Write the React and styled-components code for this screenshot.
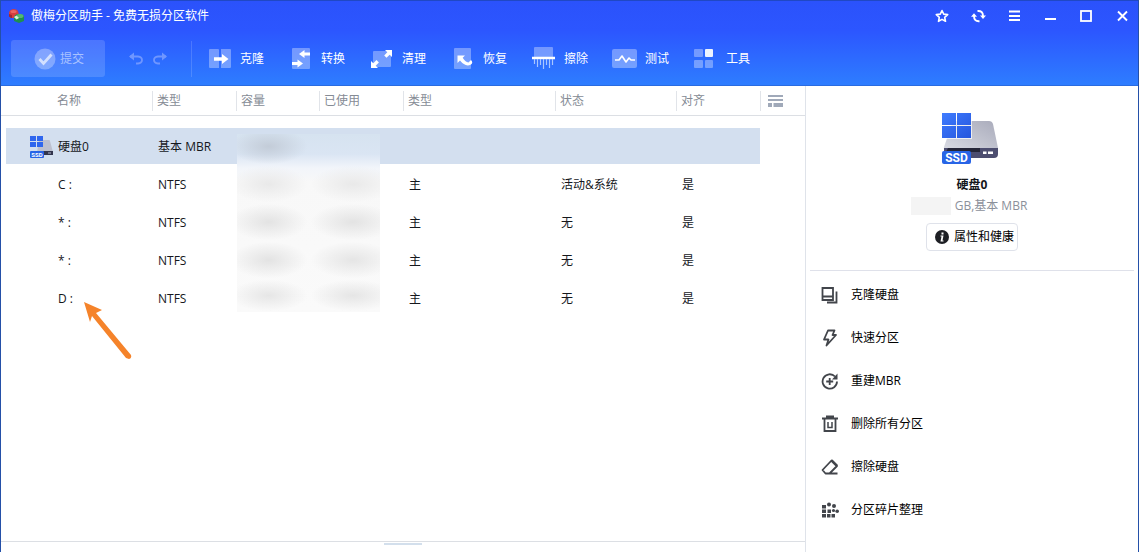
import React from "react"
import styled, { createGlobalStyle } from "styled-components"

const GlobalStyle = createGlobalStyle`
  *{ box-sizing:border-box; }
  body{
    margin:0;
    background:#fff;
    color:#15171c;
    font-family:"Open Sans","Noto Sans CJK SC",sans-serif;
    font-size:12px;
    line-height:18px;
  }
  button{ font:inherit; color:inherit; background:none; border:0; padding:0; cursor:pointer; }
  svg{ display:block; flex:none; }
`

const Window = styled.div`
  display:flex;
  flex-direction:column;
  min-height:100vh;
  border:solid #2450a8;
  border-width:0 1px;
`

const Header = styled.header`
  height:86px;
  color:#fff;
  background:linear-gradient(#2b52fb 0%,#2c56ff 35%,#2e7dff 100%);
  border-top:1px solid #2048c4;
  border-bottom:1px solid #2a6be0;
`

const TitleBar = styled.div`
  display:flex;
  align-items:center;
  height:30px;
  padding-left:6px;
`

const Title = styled.h1`
  flex:1;
  margin:0 0 0 6px;
  font-size:12px;
  font-weight:400;
`

const WindowButtons = styled.div`
  display:flex;
  gap:4px;
`

const WindowButton = styled.button`
  display:grid;
  place-items:center;
  width:32px;
  height:30px;
`

const Toolbar = styled.div`
  display:flex;
  align-items:center;
  padding:9px 0 0 10px;
`

const CommitButton = styled.button`
  display:flex;
  align-items:center;
  justify-content:center;
  gap:4px;
  width:94px;
  height:37px;
  padding-left:2px;
  border-radius:3px;
  background:rgba(255,255,255,.15);
  color:#a9c2ff;
`

const History = styled.div`
  display:flex;
  align-items:center;
  gap:10px;
  height:36px;
  margin-left:23px;
  padding-right:23px;
  border-right:1px solid rgba(255,255,255,.15);
`

const Tools = styled.div`
  display:flex;
  gap:25px;
  margin-left:16px;
`

const ToolButton = styled.button`
  display:flex;
  align-items:center;
  gap:8px;
`

const Body = styled.div`
  display:flex;
  flex:1;
`

const Main = styled.main`
  display:flex;
  flex-direction:column;
  flex:1;
`

const TableWrap = styled.div`
  position:relative;
  flex:1;
`

const Table = styled.table`
  width:100%;
  table-layout:fixed;
  border-collapse:separate;
  border-spacing:0;

  tbody::before{
    content:"";
    display:block;
    height:12px;
  }
`

const HeadCell = styled.th`
  height:30px;
  padding:0 0 0 ${p => p.$first ? 56 : 5}px;
  border-bottom:1px solid #dcdfe4;
  color:#858b95;
  font-weight:400;
  text-align:left;
  background:${p => p.$first ? "none" : "linear-gradient(#e1e4e9,#e1e4e9) left center/1px 20px no-repeat"};
  button{
    display:block;
  }
`

const Row = styled.tr`
  height:${p => p.$selected ? 37 : 38}px;
  td{
    padding:2px 0 0 6px;
    border-bottom:${p => p.$selected ? "1px solid #fff" : "0"};
  }
  td:not(:first-child):not(:last-child){
    background:${p => p.$selected ? "#d3dfef" : "none"};
  }
`

const NameCell = styled.div`
  display:flex;
  align-items:center;
  gap:5px;
  padding-left:17px;
`

const IconSlot = styled.span`
  width:24px;
`

const Mask = styled.div`
  position:absolute;
  left:236px;
  top:48px;
  width:143px;
  display:grid;
  grid-template-columns:1fr 1fr;
  grid-template-rows:31px 38px 38px 38px 33px;
  background:linear-gradient(#d6e3f0 0,#dae5f3 20px,#f2f5fa 34px,#f8f8f8 48px,#fafafa 100%);
`

const Smudge = styled.span`
  background:radial-gradient(ellipse at ${p => p.$right ? 62 : 44}% ${p => p.$top ? 40 : 50}%,${p => p.$color} 0%,transparent 68%);
`

const Pointer = styled.svg`
  position:absolute;
  left:82px;
  top:215px;
`

const Splitter = styled.div`
  height:11px;
  border-top:1px solid #dcdfe4;
  &::before{
    content:"";
    display:block;
    width:38px;
    height:2px;
    margin:1px auto 0;
    background:#d3dfec;
  }
`

const Side = styled.aside`
  width:333px;
  padding:0 4px;
  border-left:1px solid #dfe3ea;
`

const DiskInfo = styled.section`
  display:flex;
  flex-direction:column;
  align-items:center;
  height:185px;
  padding-top:26px;
  border-bottom:1px solid #dfe1ea;
`

const DiskName = styled.h2`
  margin:9px 0 0;
  font-size:12px;
  line-height:20px;
`

const DiskMeta = styled.div`
  display:flex;
  align-items:center;
  gap:4px;
  margin-top:2px;
  padding-right:6px;
  color:#8b909a;
`

const Hidden = styled.span`
  width:40px;
  height:18px;
  background:#f4f4f4;
`

const HealthButton = styled.button`
  display:flex;
  align-items:center;
  gap:5px;
  height:28px;
  margin-top:8px;
  padding:0 3px 0 8px;
  border:1px solid #dfe2ea;
  border-radius:4px;
  color:#000;
`

const Actions = styled.nav`
  display:flex;
  flex-direction:column;
  padding:2px 0 0 11px;
`

const Action = styled.button`
  display:flex;
  align-items:center;
  gap:12px;
  height:43px;
  color:#000;
  text-align:left;
`

const DiskIcon = () => (
  <svg width="62" height="54" viewBox="0 0 62 54">
    <defs>
      <linearGradient id="top" x1="0" y1="1" x2="1" y2="0">
        <stop offset="0" stopColor="#d9dbe3" />
        <stop offset="1" stopColor="#a9abbb" />
      </linearGradient>
      <linearGradient id="pane" x1="0" y1="0" x2="1" y2="1">
        <stop offset="0" stopColor="#3f7cff" />
        <stop offset="1" stopColor="#2556dd" />
      </linearGradient>
    </defs>
    <path d="M12 9h36q3 0 4 3l5 24q0 2-2 2H5q-3 0-2-3z" fill="url(#top)" />
    <path d="M3 36h54v6q0 4-4 4H7q-4 0-4-4z" fill="#4d4e70" />
    <path d="M7 36h32v4H5z" fill="#252638" />
    <path d="M42 39.500h3.500v2.500H42zM47 39.500h5v2.500h-5z" fill="#fff" />
    <path d="M0 0h31v27H0z" fill="#fff" opacity=".7" />
    <path d="M1 1h14v12H1zM16 1h14v12H16zM1 14h14v12H1zM16 14h14v12H16z" fill="url(#pane)" />
    <rect x="1" y="39" width="29" height="13" rx="2" fill="#2764e6" />
    <text x="15.500" y="50" textAnchor="middle" fontSize="12" fontWeight="700" fill="#fff" fontFamily="Roboto, sans-serif">SSD</text>
  </svg>
)

const SmallDiskIcon = () => (
  <svg width="24" height="24" viewBox="0 0 24 24">
    <path d="M10 5h10q1 0 1 1l3 11H8z" fill="#bcc0cf" />
    <path d="M8 16h16v4H8z" fill="#33354d" />
    <path d="M19 17.500h3v1h-3z" fill="#aeb4c8" />
    <path d="M1 1h6v5H1zM8 1h6v5H8zM1 7h6v5H1zM8 7h6v5H8z" fill="#2f66ee" />
    <rect x="1" y="16" width="14" height="7" rx="1" fill="#2764e6" />
    <text x="8" y="22" textAnchor="middle" fontSize="6" fontWeight="700" fill="#fff" fontFamily="Roboto, sans-serif">SSD</text>
  </svg>
)

const Logo = () => (
  <svg width="18" height="16" viewBox="0 0 18 16">
    <path d="M2 5q0-3 4-4 4 0 5 2l1 4-3 3H4L2 8z" fill="#d63f40" />
    <path d="M2 6l3 1v3H4L2 8.500z" fill="#9c2735" />
    <path d="M7 9q1-3 5-3 5 0 5 3v4l-5 2-5-2z" fill="#1f8f50" />
    <ellipse cx="13" cy="8" rx="3.500" ry="2" fill="#54b872" />
    <ellipse cx="6.500" cy="3.500" rx="3" ry="1.500" fill="#ea6663" />
    <path d="M7 9l2.500-1.500L12 10l-2.500 1.500z" fill="#d6f1db" />
  </svg>
)

const ToolIcon = ({ children }) => (
  <svg width="24" height="24" viewBox="0 0 24 24" fill="none" overflow="visible">{children}</svg>
)
const pale = "rgba(255,255,255,.34)"

const tools = [
  { label: "克隆", icon: <>
    <path d="M2 2h8q1 0 1 1v18H2q-1 0-1-1V3q0-1 1-1zM13 2h9q1 0 1 1v17q0 1-1 1h-9z" fill={pale} />
    <path d="M6 10.200h8V7l6.500 5-6.500 5v-3.200H6z" fill="#fff" />
  </> },
  { label: "转换", icon: <>
    <rect x="3" y="1" width="18" height="21" rx="1" fill={pale} />
    <path d="M21 5.500h-5.500V3L10 7l5.500 4V8.500H21zM3 15h5.500v-2.500L14 16.500l-5.500 4V18H3z" fill="#fff" />
  </> },
  { label: "清理", icon: <>
    <rect x="3" y="4" width="18" height="16" rx="1" fill={pale} />
    <path d="M15 3h7v7l-2.300-2.300-3.200 3-2.300-2.300 3.100-3.100zM1 14l2.300 2.300 3.200-3.200 2.400 2.400-3.200 3.200L8 21H1z" fill="#fff" />
  </> },
  { label: "恢复", icon: <>
    <rect x="3" y="1" width="17" height="21" rx="1" fill={pale} />
    <path d="M6.500 8.500H14l-2.300 2.300Q14 15 17.500 15.500L20 13q2.500 2.500 0 4.500-5.500 3-11-3.900L6.500 16z" fill="#fff" />
  </> },
  { label: "擦除", icon: <>
    <path d="M2 10V1q0-1 1-1h17q1 0 1 1v9z" fill={pale} />
    <path d="M0 11h23" stroke="#fff" strokeWidth="2.500" />
    <path d="M2.500 12v5M5.500 12v8M8.500 12v6M11.500 12v10M14.500 12v6M17.500 12v9M20.500 12v6" stroke="#a9c6ff" strokeWidth="1.200" />
  </> },
  { label: "测试", icon: <>
    <rect x="-1" y="2" width="25" height="19" rx="2" fill={pale} />
    <path d="M2 13h4l3-4 4 6 3-4 2 2h4" stroke="#fff" strokeWidth="1.600" strokeLinejoin="round" />
  </> },
  { label: "工具", icon: <>
    <path d="M2 2h6q1 0 1 1v6q0 1-1 1H1q-1 0-1-1V3q0-1 1-1zM2 13h6q1 0 1 1v6q0 1-1 1H1q-1 0-1-1v-6q0-1 1-1zM12 13h6q1 0 1 1v6q0 1-1 1h-6q-1 0-1-1v-6q0-1 1-1z" fill={pale} />
    <rect x="11" y="2" width="8" height="8" rx="1" fill="#edf3ff" />
  </> },
]

const windowButtons = [
  { label: "收藏", icon: <path d="M8 2.500l1.700 3.600 4 .5-3 2.700.8 4L8 11.400l-3.500 1.900.8-4-3-2.700 4-.5z" strokeWidth="1.600" strokeLinejoin="round" /> },
  { label: "刷新", icon: <>
    <path d="M7.500 3q5.500-.5 5.500 5M9.500 13.200Q4 13.700 4 8" strokeWidth="1.900" />
    <path d="M10 7.500h6L13 11zM7 8.700H1L4 5.200z" fill="#fff" stroke="none" />
  </> },
  { label: "菜单", icon: <path d="M3 3.500h11M3 8h11M3 12h11" strokeWidth="2" /> },
  { label: "最小化", icon: <path d="M3 11h11" strokeWidth="2" /> },
  { label: "最大化", icon: <rect x="3" y="3" width="10" height="10" strokeWidth="1.800" /> },
  { label: "关闭", icon: <path d="M4 3.500l9 9M13 3.500l-9 9" strokeWidth="1.900" /> },
]

const line = { stroke: "#42454b", strokeWidth: 1.800, fill: "none" }

const actions = [
  { label: "克隆硬盘", icon: <g {...line}><path d="M1.500 2h10.500v12H1.500zM1.500 10.500h10.500M15.500 5.500V16.500H6" /></g> },
  { label: "快速分区", icon: <path {...line} strokeLinejoin="round" d="M7 1.500h6.500L11.500 6H15L5.500 16.500 7.500 10.500H3z" /> },
  { label: "重建MBR", icon: <g {...line}><path d="M14 4.500a7.200 7.200 0 1 0 2 5M8.700 6v7M5.200 9.500h7" /><path d="M16.500 1.500v6h-5.500z" fill="#42454b" stroke="none" /></g> },
  { label: "删除所有分区", icon: <g {...line}><path d="M1 3.500h16M5 1.500h8M3.500 4v12h11V4" /><path d="M7 7v5.500h4V7" strokeWidth="1.500" /></g> },
  { label: "擦除硬盘", icon: <g {...line} strokeLinejoin="round"><path d="M10.500 2.500L16 8l-7.500 7.500H4.500L1.500 12zM7 15.500h9.500" /><path d="M10.500 2.300L16 7.800" strokeWidth="2.600" /></g> },
  { label: "分区碎片整理", icon: <>
    <path fill="#42454b" d="M1 4h4v3.500H1zM1 8.500h4V12H1zM1 13h4v3.500H1zM6 13h3.500v3.500H6zM10.500 13H14v3.500h-3.500zM6.500 8.500H10V12H6.500z" />
    <g fill="#42454b"><circle cx="8" cy="3.500" r="2" /><circle cx="13" cy="5" r="2" /><circle cx="12.500" cy="9.500" r="1.600" /><circle cx="16.200" cy="10.300" r="1.800" /></g>
  </> },
]

const columns = ["类型", "容量", "已使用", "类型", "状态", "对齐"]
const widths = [5, 146, 84, 83, 84, 152, 121, 84]

const rows = [
  { name: "硬盘0", fs: "基本 MBR", type: "", state: "", align: "", disk: true },
  { name: "C :", fs: "NTFS", type: "主", state: "活动&系统", align: "是" },
  { name: "* :", fs: "NTFS", type: "主", state: "无", align: "是" },
  { name: "* :", fs: "NTFS", type: "主", state: "无", align: "是" },
  { name: "D :", fs: "NTFS", type: "主", state: "无", align: "是" },
]

const smudges = ["#c3ccd8", "transparent", "#e9e9e9", "#e9e9e9", "#e3e3e3", "#e3e3e3", "#e3e3e3", "#e5e5e5", "#e6e6e6", "#e5e5e5"]

const AppHeader = () => (
  <Header>
    <TitleBar>
      <Logo />
      <Title>傲梅分区助手 - 免费无损分区软件</Title>
      <WindowButtons>
        {windowButtons.map((b) => (
          <WindowButton key={b.label} aria-label={b.label}>
            <svg width="16" height="16" viewBox="0 0 16 16" fill="none" stroke="#fff" overflow="visible">{b.icon}</svg>
          </WindowButton>
        ))}
      </WindowButtons>
    </TitleBar>
    <Toolbar>
      <CommitButton>
        <svg width="22" height="22" viewBox="0 0 22 22" fill="none">
          <circle cx="11" cy="11" r="10.500" fill="rgba(255,255,255,.3)" />
          <path d="M5.500 11l4 4.500 8-9" stroke="#d3e0ff" strokeWidth="2.800" />
        </svg>
        提交
      </CommitButton>
      <History>
        {["撤销", "重做"].map((label, i) => (
          <button key={label} aria-label={label}>
            <svg width="15" height="14" viewBox="0 0 15 14" fill="none" stroke="#6f96ff" strokeWidth="1.800">
              <g transform={i ? "translate(15 0) scale(-1 1)" : undefined}>
                <path d="M2 4.500h8q4 .5 4 3.500t-4 3.500H8" />
                <path d="M6 .5v8L1 4.500z" fill="#6f96ff" stroke="none" />
              </g>
            </svg>
          </button>
        ))}
      </History>
      <Tools>
        {tools.map((t) => (
          <ToolButton key={t.label}>
            <ToolIcon>{t.icon}</ToolIcon>
            {t.label}
          </ToolButton>
        ))}
      </Tools>
    </Toolbar>
  </Header>
)

const PartitionTable = () => (
  <TableWrap>
    <Table>
      <colgroup>
        {widths.map((w, i) => <col key={i} width={w} />)}
        <col />
      </colgroup>
      <thead>
        <tr>
          <HeadCell colSpan={2} $first>名称</HeadCell>
          {columns.map((c, i) => <HeadCell key={i}>{c}</HeadCell>)}
          <HeadCell>
            <button aria-label="列设置">
              <svg width="20" height="14" viewBox="0 0 20 14" fill="#a0a9b9">
                <path d="M3 1h15v2H3zM3 5h15v2H3zM3 9h4v4H3zM8.500 9H18v4H8.500z" />
              </svg>
            </button>
          </HeadCell>
        </tr>
      </thead>
      <tbody>
        {rows.map((r, i) => (
          <Row key={i} $selected={r.disk}>
            <td />
            <td>
              <NameCell>
                <IconSlot>{r.disk && <SmallDiskIcon />}</IconSlot>
                {r.name}
              </NameCell>
            </td>
            <td>{r.fs}</td>
            <td />
            <td />
            <td>{r.type}</td>
            <td>{r.state}</td>
            <td>{r.align}</td>
            <td />
          </Row>
        ))}
      </tbody>
    </Table>
    <Mask>
      {smudges.map((color, i) => <Smudge key={i} $color={color} $right={i % 2 === 1} $top={i < 2} />)}
    </Mask>
    <Pointer width="50" height="58" viewBox="0 0 50 58">
      <path d="M1 1l18 8-6 3 35 42q1 3-2 4l-3-1L9 15l-2 6z" fill="#f5832a" />
    </Pointer>
  </TableWrap>
)

const SidePanel = () => (
  <Side>
    <DiskInfo>
      <DiskIcon />
      <DiskName>硬盘0</DiskName>
      <DiskMeta><Hidden />GB,基本 MBR</DiskMeta>
      <HealthButton>
        <svg width="14" height="14" viewBox="0 0 14 14">
          <circle cx="7" cy="7" r="7" fill="#1d1f24" />
          <path d="M6.500 2.500h2v2h-2zM5.500 5.500h3l-1 5h1v1h-3l1-5h-1z" fill="#fff" />
        </svg>
        属性和健康
      </HealthButton>
    </DiskInfo>
    <Actions>
      {actions.map((a) => (
        <Action key={a.label}>
          <svg width="18" height="18" viewBox="0 0 18 18">{a.icon}</svg>
          {a.label}
        </Action>
      ))}
    </Actions>
  </Side>
)

const App = () => {
  return (
    <Window>
      <GlobalStyle />
      <AppHeader />
      <Body>
        <Main>
          <PartitionTable />
          <Splitter />
        </Main>
        <SidePanel />
      </Body>
    </Window>
  )
}

export default App
